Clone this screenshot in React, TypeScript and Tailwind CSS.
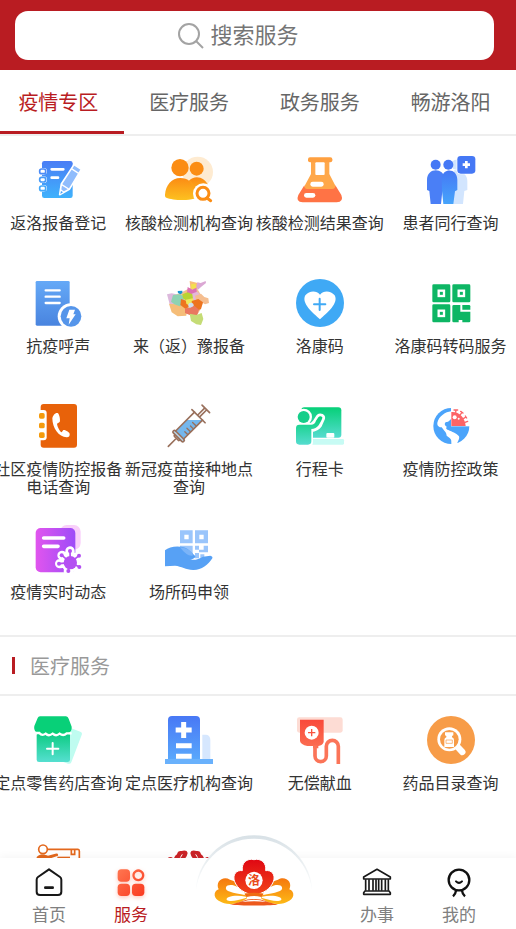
import type { ReactNode } from "react";

type Service = { label: string; icon: ReactNode };

function Icon({ children }: { children: ReactNode }) {
  return (
    <svg className="block size-12 shrink-0 overflow-visible" viewBox="0 0 144 144" fill="none" aria-hidden="true">
      {children}
    </svg>
  );
}

function Gradient({ id, from, to, flat }: { id: string; from: string; to: string; flat?: boolean }) {
  return (
    <linearGradient id={id} x1="0" y1="0" x2={flat ? "1" : "0"} y2={flat ? "0" : "1"}>
      <stop offset="0" stopColor={from} />
      <stop offset="1" stopColor={to} />
    </linearGradient>
  );
}

const notebook = (
  <Icon>
    <defs><Gradient id="nb" from="#4a7df5" to="#3fb2fc" /></defs>
    <rect x="24" y="15" width="92" height="111" rx="7" fill="url(#nb)" />
    <path d="M53 40H88M53 65H72" stroke="#fff" strokeWidth="8" strokeLinecap="round" />
    <g fill="#fff" stroke="#fff" strokeWidth="10">
      <rect x="20" y="41" width="14" height="10" rx="5" />
      <rect x="20" y="66" width="14" height="10" rx="5" />
      <rect x="20" y="92" width="14" height="10" rx="5" />
    </g>
    <g fill="#fff" strokeWidth="5">
      <rect x="17" y="39" width="18" height="14" rx="6" stroke="#4b8bf6" />
      <rect x="17" y="64" width="18" height="14" rx="6" stroke="#479bf8" />
      <rect x="17" y="90" width="18" height="14" rx="6" stroke="#43a8fa" />
    </g>
    <path d="M120 26L142 40L106 100L77 116L82 84Z" fill="#8fbcfc" stroke="#fff" strokeWidth="5" strokeLinejoin="round" />
    <path d="M112 38L134 52M83 86L104 99" stroke="#fff" strokeWidth="4" />
    <path d="M77 116L80 99L92 108Z" fill="#fff" />
    <path d="M79 114L81 105L87 109Z" fill="#459ff9" />
  </Icon>
);

const peopleSearch = (
  <Icon>
    <defs><Gradient id="ps" from="#fb8a14" to="#fdc120" /></defs>
    <circle cx="98" cy="48" r="46" fill="#feebd1" />
    <circle cx="45" cy="35" r="26" fill="#fb8d14" />
    <circle cx="95" cy="38" r="21" fill="#fb8d14" />
    <path d="M0 116C2 88 20 66 46 66C58 66 66 69 72 74C86 58 118 58 132 92C136 104 130 118 116 120C96 126 80 132 54 132C32 132 14 129 4 125C0 123 0 120 0 116Z" fill="url(#ps)" />
    <path d="M72 73C80 80 85 88 88 99" stroke="#fda31b" strokeWidth="2" />
    <circle cx="115" cy="113" r="31" fill="#fff" />
    <path d="M126 126L142 140" stroke="#fff" strokeWidth="16" />
    <circle cx="114" cy="112" r="18" stroke="#fb8d14" strokeWidth="9" />
    <path d="M126 126L137 134" stroke="#fb8d14" strokeWidth="9" strokeLinecap="round" />
  </Icon>
);

const flask = (
  <Icon>
    <path d="M45 12H100V54L119 91Q121 97 116 101H26Q22 97 24 93L45 54Z" fill="#ffa84a" />
    <rect x="36" y="4" width="73" height="15" rx="6" fill="#ffa040" />
    <path d="M25 88Q24 99 34 99H108Q119 99 118 88L136 117Q144 138 122 139H20Q-2 138 7 117Z" fill="#ff7345" />
    <rect x="58" y="19" width="28" height="38" rx="3" fill="#fff" />
    <rect x="43" y="77" width="40" height="15" rx="7" fill="#fff" />
    <rect x="24" y="111" width="34" height="14" rx="7" fill="#fff" />
  </Icon>
);

const peoplePlus = (
  <Icon>
    <defs><Gradient id="pp" from="#4578f5" to="#46a4fb" /></defs>
    <path d="M82 42Q121 48 121 76V102L112 105L108 144H74Z" fill="#d2e5fe" />
    <circle cx="88" cy="26" r="15" fill="#d2e5fe" />
    <circle cx="26" cy="26" r="15" fill="#4578f5" />
    <circle cx="64" cy="26" r="15" fill="#4578f5" />
    <path d="M0 72C0 34 50 34 53 68V106H46L42 144H11L7 105L0 102Z" fill="#4a7ff6" />
    <path d="M44 66C48 35 91 36 91 72V102L84 106L79 144H49L45 104Z" fill="url(#pp)" />
    <rect x="89" y="-2" width="58" height="57" rx="12" fill="#fff" />
    <rect x="91" y="0" width="54" height="53" rx="10" fill="#4578f5" />
    <path d="M118 15V37M107 26H129" stroke="#fff" strokeWidth="8" />
  </Icon>
);

const documentBolt = (
  <Icon>
    <defs><Gradient id="db" from="#65a9f7" to="#4984df" /></defs>
    <rect x="5" y="6" width="102" height="134" rx="4" fill="url(#db)" />
    <path d="M35 34H77M35 53H77M35 72H77" stroke="#fff" strokeWidth="7" strokeLinecap="round" />
    <circle cx="110" cy="112" r="39" fill="#fff" />
    <circle cx="111" cy="112" r="31" fill="#5595ea" />
    <path d="M106 92H123L118 106H125L104 137L107 118H97Z" fill="#fff" />
  </Icon>
);

const provinceMap = (
  <Icon>
    <path d="M12 50L40 44L62 34L76 26L96 28L108 48L114 70L106 92L98 106L62 104L36 108L20 90Z" fill="#eec39a" />
    <path d="M6 46L20 43L34 46L30 74L14 76Z" fill="#dcb9dc" />
    <path d="M50 50L62 36L76 26L84 40L74 52Z" fill="#f6bd84" />
    <path d="M74 6L98 12L104 26L88 32L76 26Z" fill="#f8bd76" />
    <path d="M78 16L92 14L94 28L80 30Z" fill="#f3e04e" />
    <path d="M97 10L107 12L122 6L123 12L108 24L99 32L94 24Z" fill="#dba8d4" />
    <path d="M68 24L82 32L94 26L96 44L80 48L66 42Z" fill="#dd72b5" />
    <path d="M80 44L96 38L107 48L101 64L84 62Z" fill="#e4b8d9" />
    <path d="M90 50L108 44L118 54L130 58L132 72L120 76L110 70L94 66Z" fill="#f5be90" />
    <path d="M12 74L30 76L52 80L66 90L64 110L38 112L20 100Z" fill="#f5bd78" />
    <path d="M24 48L44 46L56 52L56 74L44 82L28 76L18 68Z" fill="#8ed2b2" />
    <path d="M38 36L52 35L52 42L46 46L39 42Z" fill="#1596d4" />
    <path d="M52 46L68 40L82 46L84 60L66 66L54 58Z" fill="#b8d432" />
    <path d="M48 60L66 66L74 82L62 90L46 78Z" fill="#ed741f" />
    <path d="M62 62L84 58L88 74L76 82L64 74Z" fill="#eee85b" />
    <path d="M80 66L100 60L114 70L108 90L94 96L82 86Z" fill="#ed741f" />
    <circle cx="78" cy="79" r="8" fill="#cfdef0" />
    <path d="M60 88L76 86L88 80L102 92L96 110L74 108L60 102Z" fill="#e97860" />
    <path d="M74 104L94 108L110 102L115 120L108 138L94 136L78 126Z" fill="#c5dc76" />
  </Icon>
);

const heartCircle = (
  <Icon>
    <circle cx="72" cy="72" r="72" fill="#3fa9f5" />
    <path d="M72 47C61 33 39 35 28 49C15 73 51 102 72 121C93 102 129 73 116 49C105 35 83 33 72 47Z" fill="#fff" />
    <path d="M71 59V93M54 76H88" stroke="#3fa9f5" strokeWidth="6" strokeLinecap="round" />
  </Icon>
);

const qrCode = (
  <Icon>
    <g fill="#0db664">
      <rect x="16" y="16" width="54" height="54" rx="4" />
      <rect x="76" y="16" width="54" height="54" rx="4" />
      <rect x="16" y="76" width="54" height="54" rx="4" />
      <path d="M80 78H100V98H130V126Q130 130 126 130H106V123H95V130H80Q76 130 76 126V82Q76 78 80 78Z" />
      <path d="M106 78H126Q130 78 130 82V92H106Z" />
    </g>
    <g stroke="#fff" strokeWidth="7">
      <rect x="35" y="35" width="16" height="16" />
      <rect x="95" y="35" width="16" height="16" />
      <rect x="35" y="95" width="16" height="16" />
    </g>
  </Icon>
);

const phoneBook = (
  <Icon>
    <rect x="20" y="6" width="109" height="131" rx="9" fill="#e8620a" />
    <rect x="10" y="24" width="28" height="91" rx="9" fill="#fff" />
    <g fill="#f59a0c">
      <rect x="15" y="33" width="17" height="17" rx="5" />
      <rect x="15" y="62" width="17" height="17" rx="5" />
      <rect x="15" y="91" width="17" height="17" rx="5" />
    </g>
    <path d="M71 33C64 31 57 39 55 49C55 78 75 107 99 106C104 106 108 102 107 96C108 91 93 82 88 84L83 91C78 89 70 75 69 65L77 60C80 55 76 35 71 33Z" fill="#fff" />
  </Icon>
);

const syringe = (
  <Icon>
    <defs>
      <clipPath id="fluid"><rect x="0" y="54" width="144" height="90" /></clipPath>
    </defs>
    <g clipPath="url(#fluid)">
      <rect x="42" y="-16" width="85" height="32" fill="#74b7ed" transform="translate(10 133) rotate(-45)" />
    </g>
    <g transform="translate(10 133) rotate(-45)" stroke="#99705c" strokeWidth="5" strokeLinecap="round">
      <path d="M0 0H30" />
      <path d="M34 -8V8Q34 11 38 11H42M34 -8Q34 -11 38 -11H42" />
      <rect x="39" y="-22" width="9" height="44" rx="4" fill="#b9d9ef" />
      <path d="M48 -17H128M48 17H128" />
      <path d="M128 -28V28M130 -4H158M130 4H158M159 -16V16" />
      <path d="M66 16V4M78 16V1M90 16V4M102 16V1" strokeWidth="4" />
    </g>
  </Icon>
);

const teacherBoard = (
  <Icon>
    <defs><Gradient id="tb" from="#06d078" to="#55dccf" /></defs>
    <rect x="16" y="16" width="120" height="91" rx="9" fill="url(#tb)" />
    <rect x="46" y="111" width="98" height="17" rx="4" fill="#c7fbf4" />
    <rect x="91" y="93" width="24" height="14" rx="3" fill="#fff" />
    <path d="M0 68C8 62 28 66 42 68C54 67 58 52 66 42C74 36 84 42 82 50L72 72Q66 82 46 86V120Q46 128 38 128H8Q0 128 0 120Z" fill="#fff" stroke="#fff" strokeWidth="10" strokeLinejoin="round" />
    <circle cx="23" cy="45" r="25" fill="#fff" />
    <circle cx="23" cy="45" r="18" fill="#16ce8a" />
    <path d="M0 78Q0 68 10 68H42Q56 70 60 56L67 46Q73 40 79 46Q80 50 68 70Q60 81 46 81V118Q46 128 36 128H10Q0 128 0 118Z" fill="url(#tb)" />
  </Icon>
);

const globeVirus = (
  <Icon>
    <circle cx="73" cy="72" r="54" fill="#4ba4fb" />
    <path d="M72 14H134V73H72Z" fill="#fff" />
    <path d="M72 28C56 30 36 42 31 62C30 72 37 76 44 76L52 86C56 90 58 92 59 101L68 108C74 112 73 118 73 128H90C91 118 99 112 96 103C86 92 76 90 64 84C56 82 56 76 60 75C51 70 52 62 58 60C66 62 68 53 72 52Z" fill="#fff" />
    <path d="M73 30C96 28 114 46 116 72H73Z" fill="#fc6467" />
    <path d="M86 31L87 24M100 38L105 31M109 50L117 45M114 61L122 58M81 24H92M101 28L108 33M115 42L119 48" stroke="#fc6467" strokeWidth="4" strokeLinecap="round" />
    <circle cx="83" cy="46" r="6" fill="#fff" />
    <circle cx="95" cy="50" r="3" fill="#fff" />
  </Icon>
);

const newsVirus = (
  <Icon>
    <defs><Gradient id="nv" from="#e155ee" to="#9d4cf8" flat /></defs>
    <rect x="78" y="0" width="62" height="74" rx="20" fill="#f9cffa" />
    <rect x="5" y="9" width="119" height="133" rx="15" fill="url(#nv)" />
    <path d="M29 39H89M29 64H72" stroke="#fff" strokeWidth="11" strokeLinecap="round" />
    <g stroke="#fff" strokeWidth="28" strokeLinecap="round">
      <path d="M109 113L108 78M109 113L136 92M109 113L138 126M109 113L103 139M109 113L77 116M109 113L84 91" />
    </g>
    <circle cx="109" cy="113" r="28" fill="#fff" />
    <circle cx="109" cy="113" r="20" fill="#b450f2" />
    <g stroke="#b450f2" strokeWidth="5">
      <path d="M109 113L108 78M109 113L135 92M109 113L137 126M109 113L103 138M109 113L76 116M109 113L84 91" />
    </g>
    <g fill="#b450f2">
      <circle cx="108" cy="78" r="6" /><circle cx="135" cy="92" r="6" /><circle cx="136" cy="126" r="6" />
      <circle cx="103" cy="138" r="6" /><circle cx="75" cy="116" r="6" /><circle cx="83" cy="91" r="6" />
    </g>
  </Icon>
);

const handCode = (
  <Icon>
    <g fill="#9ac5fb">
      <path fillRule="evenodd" d="M45 16H83V55H45ZM58 29V43H71V29Z" />
      <path fillRule="evenodd" d="M90 16H129V55H90ZM103 29V43H116V29Z" />
      <path d="M45 62H83V100H45ZM90 62H102V74H90ZM116 62H129V82H116ZM102 74H116V82H102ZM90 84H102V100H90ZM106 88H118V100H106Z" />
    </g>
    <path d="M0 76C14 64 46 60 68 72L90 92C94 96 86 102 75 104C92 106 102 102 114 95L136 92Q144 94 142 100C130 120 108 136 84 135C62 134 50 124 30 122L0 124Z" fill="#57a1f5" />
    <path d="M45 67C60 68 69 72 83 85V92Q66 95 45 67Z" fill="#7bb4f8" />
  </Icon>
);

const shop = (
  <Icon>
    <defs><Gradient id="sh" from="#0acb80" to="#56dfd0" /></defs>
    <path d="M112 37L139 47Q146 50 143 57L112 139Q109 145 102 143L88 138Z" fill="#bffcf0" />
    <rect x="8" y="50" width="100" height="88" rx="7" fill="url(#sh)" />
    <path d="M18 1H96Q102 2 104 8L113 32C114 44 108 51 98 51Q88 60 77 50Q66 60 55 51Q44 60 34 50Q24 57 12 50C4 50 -1 40 1 30L11 6Q13 1 18 1Z" fill="#08d078" />
    <path d="M2 51Q13 51 16 51Q24 61 35 53Q44 62 56 53Q66 62 77 53Q88 61 98 52H113" stroke="#fff" strokeWidth="7" />
    <path d="M56 81V115M39 98H73" stroke="#fff" strokeWidth="6" strokeLinecap="round" />
  </Icon>
);

const hospital = (
  <Icon>
    <defs><Gradient id="ho" from="#4878f5" to="#59a8fc" /></defs>
    <path d="M112 56H124Q136 58 136 72V130H112Z" fill="#d6e7fe" />
    <path d="M9 12Q9 0 21 0H93Q105 0 105 12V132H9Z" fill="url(#ho)" />
    <rect y="129" width="144" height="15" rx="1" fill="#69b1fc" />
    <path d="M56 18V66M32 42H80" stroke="#fff" strokeWidth="15" />
    <path d="M33 89H80M33 121H80" stroke="#fff" strokeWidth="15" />
  </Icon>
);

const bloodBag = (
  <Icon>
    <defs><Gradient id="bb" from="#f9493a" to="#fb6f52" /></defs>
    <rect x="3" y="4" width="137" height="46" rx="7" fill="#fddcd4" />
    <path d="M12 11H83V78Q80 88 67 90V97H51V90H34Q14 86 12 75Z" fill="url(#bb)" />
    <circle cx="47" cy="50" r="21" fill="#fff" />
    <path d="M47 39V61M36 50H58" stroke="#f9533f" strokeWidth="4" />
    <path d="M57 88V120A17 17 0 0 0 91 120V91A18 18 0 0 1 127 91V144" stroke="#fb7458" strokeWidth="11" />
  </Icon>
);

const medicineSearch = (
  <Icon>
    <circle cx="72" cy="72" r="72" fill="#f79c48" />
    <path d="M91 92L106 108" stroke="#fff" strokeWidth="19" strokeLinecap="round" />
    <circle cx="67" cy="70" r="36" fill="#fff" />
    <circle cx="67" cy="70" r="28" fill="#f79c48" />
    <path d="M54 49H79V58L75 60V64Q81 66 81 72V93H52V72Q52 66 58 64V60L54 58Z" fill="#fff" />
    <path d="M57 72H76V82H57Z" stroke="#f79c48" strokeWidth="2" />
  </Icon>
);

const keyHand = (
  <Icon>
    <circle cx="27" cy="31" r="13" stroke="#e3681d" strokeWidth="5" />
    <path d="M42 31H132Q136 31 136 36V80M112 34V46H122V34" stroke="#e3681d" strokeWidth="5" />
    <path d="M8 80V54C20 42 34 48 42 50L64 44Q74 42 72 50L44 60V80Z" fill="#e3681d" />
    <path d="M70 55H108" stroke="#e3681d" strokeWidth="4" />
  </Icon>
);

const hearts = (
  <Icon>
    <g fill="#cb2428">
      <path d="M26 62Q28 50 36 46Q38 34 50 36Q66 32 68 42Q66 54 56 62Z" />
      <path d="M118 62Q116 50 108 46Q106 34 94 36Q78 32 76 42Q78 54 88 62Z" />
      <circle cx="16" cy="63" r="9" /><circle cx="128" cy="63" r="9" />
    </g>
    <path d="M46 56L52 46M92 46L98 56" stroke="#fff" strokeWidth="3" />
  </Icon>
);

const epidemicServices: Service[] = [
  { label: "返洛报备登记", icon: notebook },
  { label: "核酸检测机构查询", icon: peopleSearch },
  { label: "核酸检测结果查询", icon: flask },
  { label: "患者同行查询", icon: peoplePlus },
  { label: "抗疫呼声", icon: documentBolt },
  { label: "来（返）豫报备", icon: provinceMap },
  { label: "洛康码", icon: heartCircle },
  { label: "洛康码转码服务", icon: qrCode },
  { label: "社区疫情防控报备电话查询", icon: phoneBook },
  { label: "新冠疫苗接种地点查询", icon: syringe },
  { label: "行程卡", icon: teacherBoard },
  { label: "疫情防控政策", icon: globeVirus },
  { label: "疫情实时动态", icon: newsVirus },
  { label: "场所码申领", icon: handCode },
];

const medicalServices: Service[] = [
  { label: "定点零售药店查询", icon: shop },
  { label: "定点医疗机构查询", icon: hospital },
  { label: "无偿献血", icon: bloodBag },
  { label: "药品目录查询", icon: medicineSearch },
  { label: "", icon: keyHand },
  { label: "", icon: hearts },
];

const tabs = ["疫情专区", "医疗服务", "政务服务", "畅游洛阳"];

function ServiceGrid({ services }: { services: Service[] }) {
  return (
    <div className="-ml-[7px] grid auto-rows-[123px] grid-cols-4 pt-5">
      {services.map((service, i) => (
        <button key={i} type="button" className="flex flex-col items-center gap-[9px] text-base leading-[18px] text-[#333]">
          {service.icon}
          <span>{service.label}</span>
        </button>
      ))}
    </div>
  );
}

function NavButton({ label, active, children }: { label: string; active?: boolean; children: ReactNode }) {
  return (
    <button
      type="button"
      aria-current={active ? "page" : undefined}
      className={
        "flex flex-col items-center pt-2 text-[17px] leading-6 " + (active ? "text-[#b91c22]" : "text-[#808080]")
      }
    >
      <svg className="block size-9 overflow-visible" viewBox="0 0 108 108" fill="none" aria-hidden="true">
        {children}
      </svg>
      {label}
    </button>
  );
}

function SidePetal() {
  return (
    <>
      <path d="M740 221C700 245 672 236 662 230C640 224 638 199 656 193C645 171 668 151 690 164C714 172 730 185 740 205Z" fill="url(#gold)" />
      <path d="M738 207C714 177 682 175 678 187C674 200 696 203 738 211Z" fill="#fff" />
      <path d="M738 215C704 208 676 216 680 224C690 234 716 224 738 219Z" fill="#fff" />
    </>
  );
}

function FlowerLogo() {
  return (
    <svg className="block h-[94px] w-[124px]" viewBox="576 30 372 282" fill="none" aria-hidden="true">
      <defs>
        <linearGradient id="rim" x1="0" y1="0" x2="0" y2="0.5">
          <stop offset="0" stopColor="#d8e1e6" />
          <stop offset="1" stopColor="#ffffff" />
        </linearGradient>
        <Gradient id="red" from="#e00713" to="#f2471a" />
        <Gradient id="gold" from="#f5780f" to="#fdb916" />
      </defs>
      <circle cx="762" cy="206" r="175" fill="url(#rim)" />
      <circle cx="762" cy="216" r="175" fill="#fff" />
      <SidePetal />
      <g transform="matrix(-1 0 0 1 1524 0)">
        <SidePetal />
      </g>
      <path d="M762 210C732 206 712 190 704 170C696 149 710 134 727 137C724 113 741 99 762 104C783 99 800 113 797 137C814 134 828 149 820 170C812 190 792 206 762 210Z" fill="url(#red)" stroke="#fff" strokeWidth="3" />
      <circle cx="762" cy="166" r="26" fill="#fff" />
      <text x="762" y="179" fontSize="36" fontWeight="700" textAnchor="middle" fill="#e94b1b">洛</text>
      <path d="M733 206Q762 200 791 206L784 216Q762 210 740 216Z" fill="#ef6b13" />
      <path d="M690 239C725 232 735 221 762 222C789 221 799 232 834 239C800 242 724 242 690 239Z" fill="#ed591c" />
      <path d="M725 231Q762 218 799 231Q762 226 725 231Z" fill="#fff" />
    </svg>
  );
}

export default function App() {
  return (
    <div className="flex h-screen flex-col overflow-hidden bg-white font-['Noto_Sans_CJK_SC',sans-serif]">
      <header className="shrink-0 bg-[#b91c22] pt-[11px] pr-[22px] pb-2.5 pl-[15px]">
        <label className="flex h-[49px] items-center justify-center gap-[7px] rounded-[13px] bg-white">
          <svg className="size-[26px] shrink-0" viewBox="0 0 26 26" fill="none" stroke="#a3a3a3" strokeWidth="2" aria-hidden="true">
            <circle cx="11" cy="11" r="10" />
            <path d="M18 18L25 25" />
          </svg>
          <input
            type="search"
            aria-label="搜索服务"
            placeholder="搜索服务"
            className="h-8 w-[121px] pb-1 text-[22px] text-[#757575] outline-none placeholder:text-[#757575]"
          />
        </label>
      </header>

      <nav className="shrink-0 border-b-2 border-[#eeeeee]">
        <div className="-ml-[7px] grid grid-cols-4">
          {tabs.map((tab, i) => (
            <button
              key={tab}
              type="button"
              className={
                "h-16 border-b-3 pt-0.5 text-xl leading-8 " +
                (i === 0 ? "border-[#b91c22] text-[#b91c22]" : "border-transparent text-[#666]")
              }
            >
              {tab}
            </button>
          ))}
        </div>
      </nav>

      <main className="min-h-0 flex-1 overflow-x-hidden overflow-y-auto [scrollbar-width:none]">
        <ServiceGrid services={epidemicServices} />
        <section>
          <div className="-mt-[13px] flex h-[61px] items-center gap-[15px] border-t-2 border-b-2 border-[#eeeeee] pl-3">
            <span className="h-[17px] w-[3px] bg-[#b91c22]" />
            <h2 className="text-xl leading-8 text-[#999]">医疗服务</h2>
          </div>
          <ServiceGrid services={medicalServices} />
        </section>
      </main>

      <footer className="relative z-10 grid h-[71px] shrink-0 grid-cols-[1fr_1fr_2fr_1fr_1fr] bg-white pr-4 pl-2 shadow-[0_-2px_8px_rgba(0,0,0,0.04)]">
        <NavButton label="首页">
          <path d="M54 10L87 33Q91 36 91 41V77Q91 87 81 87H27Q17 87 17 77V41Q17 36 21 33Z" stroke="#181818" strokeWidth="6" strokeLinejoin="round" />
          <path d="M43 65H65" stroke="#181818" strokeWidth="8" strokeLinecap="round" />
        </NavButton>
        <NavButton label="服务" active>
          <defs>
            <linearGradient id="tiles" gradientUnits="userSpaceOnUse" x1="14" y1="10" x2="94" y2="90">
              <stop offset="0" stopColor="#ff7650" />
              <stop offset="1" stopColor="#fa3a20" />
            </linearGradient>
          </defs>
          <g fill="url(#tiles)" className="drop-shadow-[0_5px_7px_rgba(255,80,40,0.3)]">
            <rect x="14" y="10" width="37" height="37" rx="11" />
            <rect x="14" y="53" width="37" height="37" rx="11" />
            <rect x="57" y="53" width="37" height="37" rx="11" />
            <path fillRule="evenodd" d="M76 10a18 18 0 1 0 .1 0ZM76 17a11 11 0 1 1-.1 0Z" />
          </g>
        </NavButton>
        <div className="relative">
          <button type="button" aria-label="洛阳" className="absolute bottom-0 left-1/2 -translate-x-1/2">
            <FlowerLogo />
          </button>
        </div>
        <NavButton label="办事">
          <g stroke="#181818" strokeWidth="5" strokeLinejoin="round">
            <path d="M54 10L94 33V39H14V33Z" />
            <path d="M20 40V74M30 40V74M42 40V74M51 40V74M59 40V74M68 40V74M79 40V74M88 40V74" />
            <path d="M18 75H90L94 80V85H14V80Z" />
          </g>
        </NavButton>
        <NavButton label="我的">
          <circle cx="54" cy="42" r="31" stroke="#111" strokeWidth="7" />
          <path d="M45 46Q54 55 63 46" stroke="#111" strokeWidth="6" strokeLinecap="round" />
          <path d="M45 74Q44 84 36 91M63 74Q64 84 72 91" stroke="#111" strokeWidth="7" />
        </NavButton>
      </footer>
    </div>
  );
}
